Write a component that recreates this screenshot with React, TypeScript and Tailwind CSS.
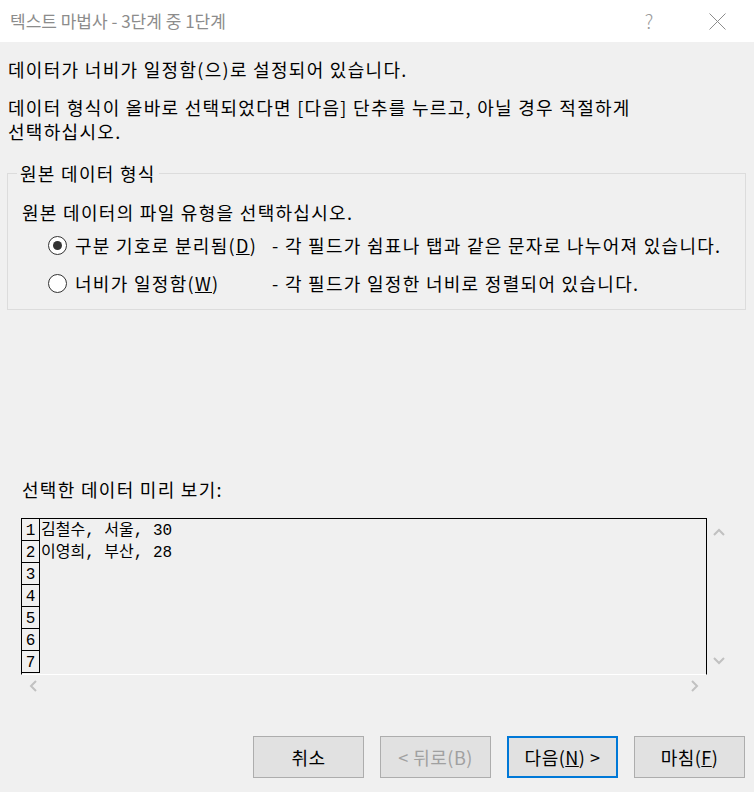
const rows = ["김철수, 서울, 30", "이영희, 부산, 28", "", "", "", "", ""];

const Radio = ({ checked }: { checked?: boolean }) => (
  <span className="w-[19px] h-[19px] rounded-full border border-[#333] bg-white flex items-center justify-center shrink-0">
    {checked && <span className="w-[9px] h-[9px] rounded-full bg-[#333]" />}
  </span>
);

const Btn = ({
  children,
  primary,
  disabled,
}: {
  children: React.ReactNode;
  primary?: boolean;
  disabled?: boolean;
}) => (
  <button
    className={
      "w-[111px] h-[42px] bg-[#e1e1e1] text-[18px] tracking-[0.5px] flex items-center justify-center " +
      (primary ? "border-2 border-[#0078d7] " : "border border-[#adadad] ") +
      (disabled ? "text-[#a0a0a0]" : "text-black")
    }
  >
    {children}
  </button>
);

export default function App() {
  return (
    <div
      className="w-[754px] h-[792px] bg-[#f0f0f0] flex flex-col text-black overflow-hidden"
      style={{ fontFamily: '"Noto Sans CJK KR", "Noto Sans", sans-serif' }}
    >
      {/* title bar */}
      <div className="h-[42px] bg-white flex items-center shrink-0">
        <span className="pl-[10px] text-[17px] text-[#8c8c8c] flex-1">텍스트 마법사 - 3단계 중 1단계</span>
        <span className="text-[19px] text-[#9a9a9a] w-[20px] text-center mr-[50px] font-light">?</span>
        <svg width="17" height="17" viewBox="0 0 17 17" className="mr-[28px]">
          <path d="M0.5 0.5 L16.5 16.5 M16.5 0.5 L0.5 16.5" stroke="#8c8c8c" strokeWidth="1" fill="none" />
        </svg>
      </div>

      <div className="flex flex-col flex-1 px-[8px] text-[18px] leading-[24px] tracking-[1.3px]">
        <p className="mt-[15px]">데이터가 너비가 일정함(으)로 설정되어 있습니다.</p>
        <p className="mt-[14px]">
          데이터 형식이 올바로 선택되었다면 [다음] 단추를 누르고, 아닐 경우 적절하게
          <br />
          선택하십시오.
        </p>

        <fieldset className="mt-[18px] border border-[#dcdcdc] w-[739px] -ml-[1px] h-[149px] pl-[14px]">
          <legend className="ml-[-5px] px-[3px] leading-[24px]">원본 데이터 형식</legend>
          <p className="mt-[15px]">원본 데이터의 파일 유형을 선택하십시오.</p>
          <div className="flex items-center mt-[9px] h-[24px]">
            <span className="ml-[26px]">
              <Radio checked />
            </span>
            <span className="ml-[8px] w-[197px]">
              구분 기호로 분리됨(<span className="underline">D</span>)
            </span>
            <span>- 각 필드가 쉼표나 탭과 같은 문자로 나누어져 있습니다.</span>
          </div>
          <div className="flex items-center mt-[14px] h-[24px]">
            <span className="ml-[26px]">
              <Radio />
            </span>
            <span className="ml-[8px] w-[197px]">
              너비가 일정함(<span className="underline">W</span>)
            </span>
            <span>- 각 필드가 일정한 너비로 정렬되어 있습니다.</span>
          </div>
        </fieldset>

        <p className="mt-[167px] ml-[14px]">선택한 데이터 미리 보기:</p>

        {/* preview */}
        <div className="mt-[17px] ml-[13px] w-[709px] flex flex-col tracking-normal">
          <div className="flex">
            <div
              className="w-[686px] h-[157px] border-t border-l border-r border-black border-b border-b-white flex flex-col overflow-hidden"
              style={{ fontFamily: '"Liberation Mono", "Noto Sans CJK KR", monospace' }}
            >
              {rows.map((r, i) => (
                <div key={i} className="flex h-[22px] shrink-0">
                  <div className="w-[18px] border-r border-b border-black text-[16px] leading-[24px] text-center">
                    {i + 1}
                  </div>
                  <div className="pl-[1px] text-[16px] leading-[24px] whitespace-pre">{r}</div>
                </div>
              ))}
            </div>
            <div className="w-[23px] flex flex-col items-center justify-between py-[10px]">
              <svg width="12" height="8" viewBox="0 0 12 8">
                <path d="M1 7 L6 2 L11 7" stroke="#c1c1c1" strokeWidth="2" fill="none" />
              </svg>
              <svg width="12" height="8" viewBox="0 0 12 8">
                <path d="M1 1 L6 6 L11 1" stroke="#c1c1c1" strokeWidth="2" fill="none" />
              </svg>
            </div>
          </div>
          <div className="w-[686px] h-[22px] flex items-center justify-between px-[8px]">
            <svg width="8" height="12" viewBox="0 0 8 12">
              <path d="M7 1 L2 6 L7 11" stroke="#c1c1c1" strokeWidth="2" fill="none" />
            </svg>
            <svg width="8" height="12" viewBox="0 0 8 12">
              <path d="M1 1 L6 6 L1 11" stroke="#c1c1c1" strokeWidth="2" fill="none" />
            </svg>
          </div>
        </div>

        <div className="mt-auto mb-[14px] flex justify-end gap-[16px] pr-[1px] tracking-normal">
          <Btn>취소</Btn>
          <Btn disabled>&lt; 뒤로(B)</Btn>
          <Btn primary>
            다음(<span className="underline">N</span>) &gt;
          </Btn>
          <Btn>
            마침(<span className="underline">F</span>)
          </Btn>
        </div>
      </div>
    </div>
  );
}
